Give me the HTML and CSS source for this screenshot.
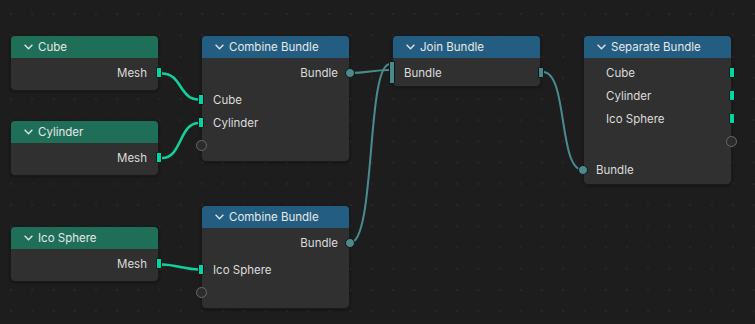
FILE: index.html
```html
<!DOCTYPE html>
<html>
<head>
<meta charset="utf-8">
<link rel="stylesheet" href="styles.css">
</head>
<body>
<div class="canvas">
  <svg class="wires" width="755" height="324" viewBox="0 0 755 324">
    <g fill="none" stroke-linecap="round">
      <path class="w-geo" d="M162 73.5 C182 73.5 179 99.5 199 99.5"/>
      <path class="w-geo" d="M162 158 C182 158 179 123 199 123"/>
      <path class="w-geo" d="M162 264.5 C175 264.5 186 269.5 199 269.5"/>
      <path class="w-bun" d="M350 73 C368 73 372 70 390 70"/>
      <path class="w-bun" d="M350 243 C376 243 366 64 390 64"/>
      <path class="w-bun" d="M543 72 C568 72 558 170 583 170"/>
    </g>
  </svg>

  <div class="node n-cube">
    <div class="head geo"><svg class="chev" viewBox="0 0 9 6"><polyline points="0.6,0.8 4.5,4.8 8.4,0.8"/></svg><span>Cube</span></div>
    <div class="body prim">
      <div class="row out"><span>Mesh</span><i class="sock rect geo-s"></i></div>
    </div>
  </div>

  <div class="node n-cyl">
    <div class="head geo"><svg class="chev" viewBox="0 0 9 6"><polyline points="0.6,0.8 4.5,4.8 8.4,0.8"/></svg><span>Cylinder</span></div>
    <div class="body prim">
      <div class="row out"><span>Mesh</span><i class="sock rect geo-s"></i></div>
    </div>
  </div>

  <div class="node n-ico">
    <div class="head geo"><svg class="chev" viewBox="0 0 9 6"><polyline points="0.6,0.8 4.5,4.8 8.4,0.8"/></svg><span>Ico Sphere</span></div>
    <div class="body prim">
      <div class="row out"><span>Mesh</span><i class="sock rect geo-s"></i></div>
    </div>
  </div>

  <div class="node n-comb1">
    <div class="head bun"><svg class="chev" viewBox="0 0 9 6"><polyline points="0.6,0.8 4.5,4.8 8.4,0.8"/></svg><span>Combine Bundle</span></div>
    <div class="body comb">
      <div class="row out"><span>Bundle</span><i class="sock circ bun-s"></i></div>
      <div class="gap"></div>
      <div class="row in"><i class="sock rect geo-s"></i><span>Cube</span></div>
      <div class="row in"><i class="sock rect geo-s"></i><span>Cylinder</span></div>
      <div class="row in"><i class="sock empty"></i></div>
    </div>
  </div>

  <div class="node n-comb2">
    <div class="head bun"><svg class="chev" viewBox="0 0 9 6"><polyline points="0.6,0.8 4.5,4.8 8.4,0.8"/></svg><span>Combine Bundle</span></div>
    <div class="body comb">
      <div class="row out"><span>Bundle</span><i class="sock circ bun-s"></i></div>
      <div class="gap"></div>
      <div class="row in"><i class="sock rect geo-s"></i><span>Ico Sphere</span></div>
      <div class="row in"><i class="sock empty"></i></div>
    </div>
  </div>

  <div class="node n-join">
    <div class="head bun"><svg class="chev" viewBox="0 0 9 6"><polyline points="0.6,0.8 4.5,4.8 8.4,0.8"/></svg><span>Join Bundle</span></div>
    <div class="body join">
      <div class="row in"><i class="sock multi bun-s"></i><span>Bundle</span><i class="sock rect bun-s right"></i></div>
    </div>
  </div>

  <div class="node n-sep">
    <div class="head bun"><svg class="chev" viewBox="0 0 9 6"><polyline points="0.6,0.8 4.5,4.8 8.4,0.8"/></svg><span>Separate Bundle</span></div>
    <div class="body sep">
      <div class="row item"><span>Cube</span><i class="sock rect geo-s right"></i></div>
      <div class="row item"><span>Cylinder</span><i class="sock rect geo-s right"></i></div>
      <div class="row item"><span>Ico Sphere</span><i class="sock rect geo-s right"></i></div>
      <div class="row item"><i class="sock empty right"></i></div>
      <div class="gap2"></div>
      <div class="row in"><i class="sock circ bun-s"></i><span>Bundle</span></div>
    </div>
  </div>
</div>
</body>
</html>
```

FILE: styles.css
```css
html, body {
  margin: 0;
  padding: 0;
  background: #1d1d1d;
}

.canvas {
  position: relative;
  width: 755px;
  height: 324px;
  overflow: hidden;
  background-color: #1d1d1d;
  background-image: radial-gradient(circle, #282828 0.9px, transparent 1.3px);
  background-size: 21.24px 21.24px;
  background-position: 0.4px 3.4px;
  font-family: Inter, "Noto Sans", sans-serif;
  font-size: 11.5px;
  color: #dcdcdc;
}

.wires {
  position: absolute;
  left: 0;
  top: 0;
}

.w-geo {
  stroke: #14cf9c;
  stroke-width: 2.6;
}

.w-bun {
  stroke: #4a8c8d;
  stroke-width: 2;
}

.node {
  position: absolute;
  width: 149px;
  box-sizing: border-box;
  background: #303030;
  border: 1px solid #1a1a1a;
  border-radius: 5px;
  box-shadow: 0 1px 3px rgba(0, 0, 0, 0.35);
}

.n-cube { left: 10px; top: 35px; }
.n-cyl { left: 10px; top: 120px; }
.n-ico { left: 10px; top: 226px; }
.n-comb1 { left: 201px; top: 35px; }
.n-comb2 { left: 201px; top: 205px; }
.n-join { left: 392px; top: 35px; }
.n-sep { left: 583px; top: 35px; }

.head {
  height: 22px;
  display: flex;
  align-items: center;
  gap: 5px;
  padding-left: 13px;
  border-radius: 4px 4px 0 0;
  color: #e8e8e8;
}

.head.geo { background: #1e6e58; }
.head.bun { background: #235e82; }

.chev {
  width: 9px;
  height: 6px;
  fill: none;
  stroke: #e4e4e4;
  stroke-width: 1.3;
}

.body { padding-top: 3px; }
.body.prim { padding-bottom: 6px; }
.body.comb { padding-bottom: 4px; }
.body.join { padding-bottom: 2px; }
.body.sep { padding-bottom: 3px; }

.gap { height: 4px; }
.gap2 { height: 5px; }

.row {
  position: relative;
  height: 23px;
  display: flex;
  align-items: center;
  padding: 0 11px;
}

.row.out { justify-content: flex-end; }
.row.item { padding-left: 22px; }
.n-sep .row.in { padding-left: 12px; }

.sock {
  position: absolute;
  box-sizing: border-box;
  top: 50%;
}

.sock.rect {
  width: 6px;
  height: 11px;
  margin-top: -5.5px;
  border: 1px solid #151515;
  border-radius: 1px;
}

.sock.multi {
  width: 6px;
  height: 23px;
  margin-top: -11.5px;
  border: 1px solid #151515;
  border-radius: 1px;
}

.sock.circ {
  width: 10px;
  height: 10px;
  margin-top: -5px;
  border: 1px solid #151515;
  border-radius: 50%;
}

.sock.empty {
  width: 11px;
  height: 11px;
  margin-top: -5.5px;
  border: 1.5px solid #6a6a6a;
  border-radius: 50%;
  background: #2c2c2c;
}

.geo-s { background: #00d6a3; }
.bun-s { background: #4a8a8b; }

.row.in .sock { left: -4px; }
.row.in .sock.circ,
.row.in .sock.empty { left: -6px; }
.row.out .sock.rect,
.sock.rect.right { left: auto; right: -4px; }
.row.out .sock.circ { right: -6px; }
.sock.empty.right { left: auto; right: -6px; }
```
